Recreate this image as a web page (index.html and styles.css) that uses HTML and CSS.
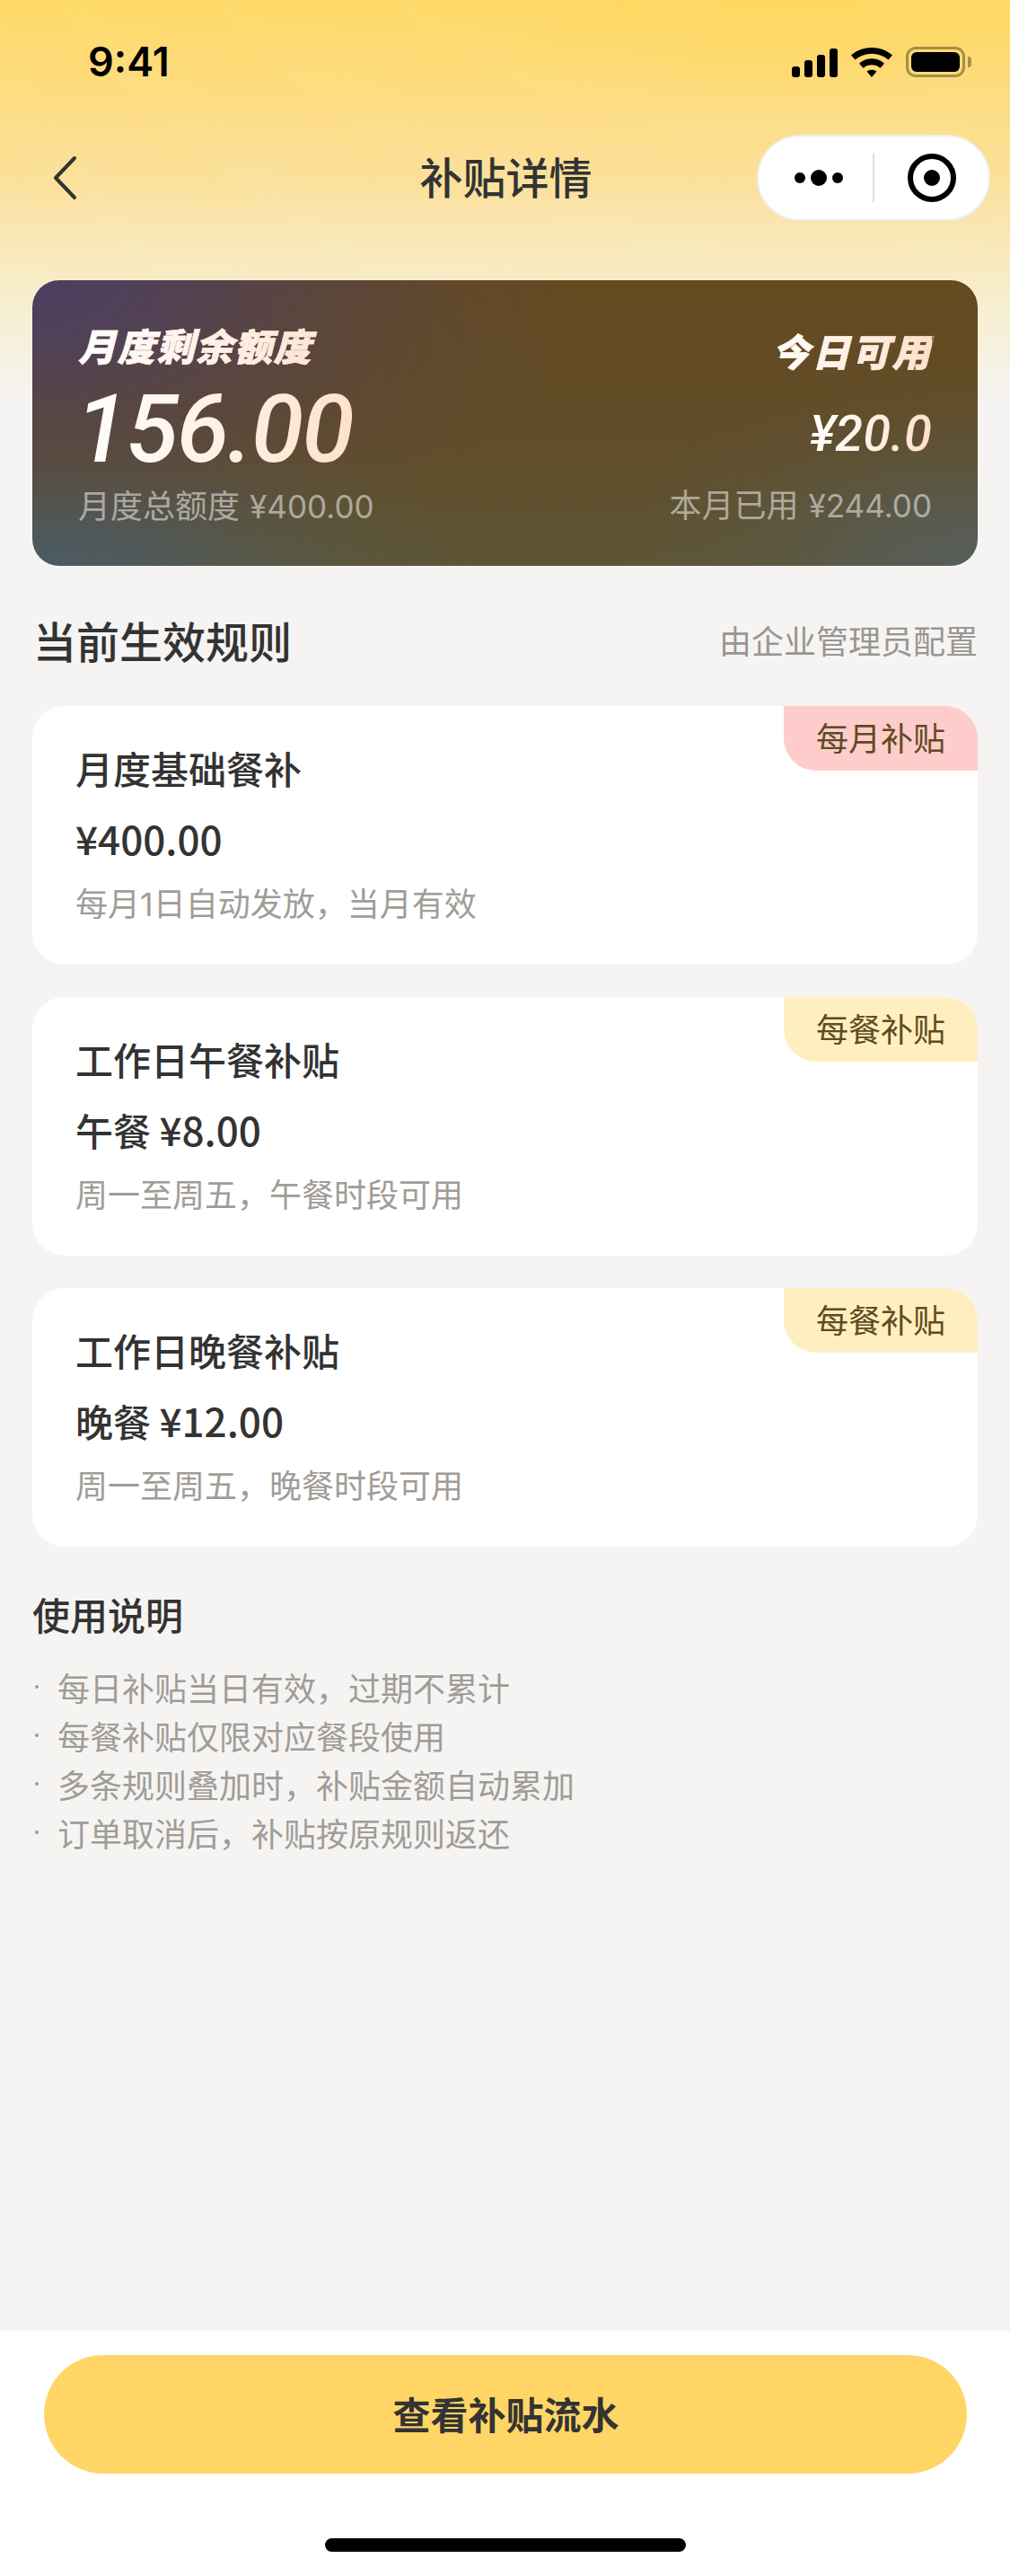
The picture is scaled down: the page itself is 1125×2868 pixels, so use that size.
FILE: index.html
```html
<!DOCTYPE html>
<html lang="zh-CN">

<head>
    <meta charset="UTF-8">
    <meta name="viewport" content="width=device-width, initial-scale=1.0">
    <title>补贴详情</title>
    <link rel="stylesheet" href="styles.css">
</head>

<body>
    <div class="page">
        <div class="status-bar">
            <span class="time">9:41</span>
            <div class="status-icons">
                <svg class="signal" width="51" height="32" viewBox="0 0 51 32">
                    <rect x="0" y="20" width="9" height="12" rx="3"/>
                    <rect x="14" y="13" width="9" height="19" rx="3"/>
                    <rect x="28" y="7" width="9" height="25" rx="3"/>
                    <rect x="42" y="0" width="9" height="32" rx="3"/>
                </svg>
                <svg class="wifi" width="46" height="33" viewBox="0 0 46 33">
                    <path d="M0 8.500C13-2.800 33-2.800 46 8.500L41.500 13.500C30.500 4.500 15.500 4.500 4.500 13.500Z"/>
                    <path d="M9 17.800C17 10.500 29 10.500 37 17.800L32.500 22.800C27 18.200 19 18.200 13.500 22.800Z"/>
                    <path d="M17.500 26.500C20.500 24 25.500 24 28.500 26.500L23 33Z"/>
                </svg>
                <div class="battery">
                    <div class="battery-level"></div>
                </div>
            </div>
        </div>

        <div class="nav-bar">
            <svg class="back" width="30" height="50" viewBox="0 0 30 50">
                <path d="M26 3 5 25l21 22" fill="none" stroke="#333" stroke-width="4" stroke-linecap="round" stroke-linejoin="round"/>
            </svg>
            <h1 class="nav-title">补贴详情</h1>
            <div class="capsule">
                <div class="capsule-side more">
                    <span class="dot"></span>
                    <span class="dot big"></span>
                    <span class="dot"></span>
                </div>
                <div class="capsule-line"></div>
                <div class="capsule-side">
                    <span class="target"></span>
                </div>
            </div>
        </div>

        <div class="content">
            <div class="quota-card">
                <div class="quota-col">
                    <div class="quota-title">月度剩余额度</div>
                    <div class="quota-num">156.00</div>
                    <div class="quota-sub">月度总额度 <span class="num">¥400.00</span></div>
                </div>
                <div class="quota-col right">
                    <div class="today-title">今日可用</div>
                    <div class="today-num">¥20.0</div>
                    <div class="quota-sub">本月已用 <span class="num">¥244.00</span></div>
                </div>
            </div>

            <div class="section-head">
                <h2>当前生效规则</h2>
                <span>由企业管理员配置</span>
            </div>

            <div class="rule-list">
                <div class="rule-card">
                    <span class="tag tag-month">每月补贴</span>
                    <div class="rule-name">月度基础餐补</div>
                    <div class="rule-amount"><span class="price">¥400.00</span></div>
                    <div class="rule-desc">每月<span class="num">1</span>日自动发放，当月有效</div>
                </div>
                <div class="rule-card">
                    <span class="tag tag-meal">每餐补贴</span>
                    <div class="rule-name">工作日午餐补贴</div>
                    <div class="rule-amount">午餐 <span class="price">¥8.00</span></div>
                    <div class="rule-desc">周一至周五，午餐时段可用</div>
                </div>
                <div class="rule-card">
                    <span class="tag tag-meal">每餐补贴</span>
                    <div class="rule-name">工作日晚餐补贴</div>
                    <div class="rule-amount">晚餐 <span class="price">¥12.00</span></div>
                    <div class="rule-desc">周一至周五，晚餐时段可用</div>
                </div>
            </div>

            <div class="notes">
                <h3>使用说明</h3>
                <ul>
                    <li>每日补贴当日有效，过期不累计</li>
                    <li>每餐补贴仅限对应餐段使用</li>
                    <li>多条规则叠加时，补贴金额自动累加</li>
                    <li>订单取消后，补贴按原规则返还</li>
                </ul>
            </div>
        </div>

        <div class="footer">
            <button class="flow-btn" type="button">查看补贴流水</button>
            <div class="home-bar"></div>
        </div>
    </div>
</body>

</html>
```

FILE: styles.css
```css
*{
    box-sizing: border-box;
    padding: 0;
    margin: 0;
}

body{
    font-family: "Noto Sans CJK SC", "Liberation Sans", sans-serif;
    color: #333;
}

.num{
    font-family: Inter, "Liberation Sans", sans-serif;
    line-height: 1;
}

.page{
    display: flex;
    flex-direction: column;
    height: 100vh;
    overflow: hidden;
    background:
        radial-gradient(ellipse 420px 130px at 880px 0, rgba(255, 214, 92, 0.55), rgba(255, 214, 92, 0)) top / 100% 330px no-repeat,
        repeating-radial-gradient(circle at 900px -625px, rgba(255, 255, 255, 0) 0, rgba(255, 255, 255, 0.025) 130px, rgba(255, 255, 255, 0) 131px) top / 100% 330px no-repeat,
        linear-gradient(180deg, #ffd966 0, #fddc7e 100px, #fbe09a 200px, #f8ebc3 300px, #f7efd2 350px, #f5f4f2 450px) top / 100% 450px no-repeat,
        #f5f4f2;
}

/* status bar */
.status-bar{
    display: flex;
    justify-content: space-between;
    align-items: center;
    height: 34px;
    margin-top: 52px;
    padding: 0 50px 0 98px;
}

.time{
    font-family: Inter, "Liberation Sans", sans-serif;
    font-size: 45px;
    font-weight: 600;
    line-height: 34px;
    color: #000;
}

.status-icons{
    display: flex;
    align-items: center;
}

.signal{
    margin-right: 15px;
    margin-top: 2px;
}

.wifi{
    margin-right: 15px;
}

.battery{
    position: relative;
    width: 66px;
    height: 34px;
    padding: 3px;
    border: 3px solid rgba(0, 0, 0, 0.35);
    border-radius: 11px;
}

.battery::after{
    content: "";
    position: absolute;
    right: -10px;
    top: 8px;
    width: 4px;
    height: 12px;
    border-radius: 0 4px 4px 0;
    background: rgba(0, 0, 0, 0.35);
}

.battery-level{
    height: 100%;
    border-radius: 6px;
    background: #000;
}

/* nav */
.nav-bar{
    position: relative;
    display: flex;
    align-items: center;
    justify-content: center;
    height: 96px;
    margin-top: 64px;
}

.back{
    position: absolute;
    left: 57px;
    top: 23px;
}

.nav-title{
    padding: 0 0 6px 2px;
    font-size: 48px;
    font-weight: 500;
    line-height: 60px;
    color: #333;
}

.capsule{
    position: absolute;
    right: 22px;
    top: 0;
    display: flex;
    align-items: center;
    width: 260px;
    height: 96px;
    background: #fff;
    border: 2px solid #eeeeee;
    border-radius: 48px;
}

.capsule-side{
    flex: none;
    width: 127px;
    display: flex;
    align-items: center;
    justify-content: center;
    gap: 6px;
}

.capsule-side.more{
    padding-left: 7px;
}

.capsule-line{
    width: 2px;
    height: 54px;
    background: #dddddd;
}

.dot{
    width: 12px;
    height: 12px;
    border-radius: 50%;
    background: #000;
}

.dot.big{
    width: 18px;
    height: 18px;
}

.target{
    position: relative;
    width: 54px;
    height: 54px;
    border: 6px solid #000;
    border-radius: 50%;
}

.target::after{
    content: "";
    position: absolute;
    left: 12px;
    top: 12px;
    width: 18px;
    height: 18px;
    border-radius: 50%;
    background: #000;
}

/* content */
.content{
    flex: 1;
    padding: 66px 36px 0;
}

.quota-card{
    display: flex;
    justify-content: space-between;
    height: 318px;
    padding: 50px 51px 0;
    border-radius: 30px;
    background:
        radial-gradient(ellipse 620px 320px at 0 0, rgba(76, 62, 100, 1) 0, rgba(76, 62, 100, 0.75) 25%, rgba(76, 62, 100, 0.42) 50%, rgba(76, 62, 100, 0.15) 75%, rgba(76, 62, 100, 0) 100%),
        radial-gradient(ellipse 520px 170px at 0 100%, rgba(74, 92, 104, 0.95) 0, rgba(74, 92, 104, 0.7) 25%, rgba(74, 92, 104, 0.35) 50%, rgba(74, 92, 104, 0.12) 75%, rgba(74, 92, 104, 0) 100%),
        radial-gradient(ellipse 420px 220px at 100% 100%, rgba(86, 94, 92, 0.95) 0, rgba(86, 94, 92, 0.7) 25%, rgba(86, 94, 92, 0.35) 50%, rgba(86, 94, 92, 0.12) 75%, rgba(86, 94, 92, 0) 100%),
        linear-gradient(180deg, #654a20 0, #614d29 55%, #5e5534 100%);
}

.quota-col{
    display: flex;
    flex-direction: column;
}

.quota-col.right{
    align-items: flex-end;
}

.quota-title,
.today-title,
.quota-num,
.today-num{
    font-style: italic;
    background: linear-gradient(90deg, #ffffff 0%, #ffdfc9 100%);
    -webkit-background-clip: text;
    background-clip: text;
    color: transparent;
}

.quota-title,
.today-title{
    font-size: 42px;
    font-weight: 900;
    line-height: 44px;
    letter-spacing: 1.500px;
    -webkit-text-stroke: 0.500px #fff1e6;
}

.today-title{
    margin-top: 6px;
    letter-spacing: 2.500px;
}

.quota-num{
    margin: 24px 0 0 -3px;
    font-family: Roboto, "Liberation Sans", sans-serif;
    font-size: 106px;
    font-weight: 500;
    line-height: 96px;
    letter-spacing: -2px;
}

.today-num{
    margin-top: 43px;
    font-family: Roboto, "Liberation Sans", sans-serif;
    font-size: 56px;
    font-weight: 500;
    line-height: 56px;
}

.quota-sub{
    margin-top: 12px;
    font-size: 36px;
    line-height: 46px;
    word-spacing: 3px;
    color: rgba(255, 255, 255, 0.5);
}

.quota-sub .num{
    font-size: 35px;
}

.today-num + .quota-sub{
    margin-top: 26px;
}

.section-head{
    display: flex;
    justify-content: space-between;
    align-items: center;
    height: 60px;
    margin-top: 52px;
    padding-left: 1px;
}

.section-head h2{
    font-size: 48px;
    font-weight: 500;
    color: #333;
}

.section-head span{
    font-size: 36px;
    color: #999591;
}

.rule-list{
    display: flex;
    flex-direction: column;
    gap: 36px;
    margin-top: 44px;
}

.rule-card{
    position: relative;
    height: 288px;
    padding: 43px 48px 0;
    border-radius: 36px;
    background: #fff;
}

.tag{
    position: absolute;
    right: 0;
    top: 0;
    width: 216px;
    height: 72px;
    font-size: 36px;
    line-height: 68px;
    text-align: center;
    border-radius: 0 36px 0 36px;
    color: #5f4b1f;
}

.tag-month{
    background: #ffcccc;
}

.tag-meal{
    background: #ffefc0;
}

.rule-name{
    font-size: 42px;
    font-weight: 500;
    line-height: 52px;
}

.rule-amount{
    margin-top: 26px;
    font-size: 42px;
    font-weight: 500;
    line-height: 54px;
}

.price{
    font-size: 44px;
    line-height: 1;
}

.rule-desc{
    margin-top: 16px;
    font-size: 36px;
    line-height: 54px;
    color: #a09c98;
}

.notes{
    margin-top: 47px;
}

.notes h3{
    font-size: 42px;
    font-weight: 500;
    line-height: 56px;
}

.notes ul{
    margin-top: 26px;
    list-style: none;
}

.notes li{
    position: relative;
    padding-left: 28px;
    font-size: 36px;
    line-height: 54px;
    color: #a09c98;
}

.notes li::before{
    content: "";
    position: absolute;
    left: 3px;
    top: 25px;
    width: 4px;
    height: 4px;
    border-radius: 50%;
    background: #a09c98;
}

/* bottom */
.footer{
    display: flex;
    flex-direction: column;
    align-items: center;
    height: 273px;
    padding-top: 27px;
    background: #fff;
}

.flow-btn{
    width: 1028px;
    height: 132px;
    padding: 0 0 4px 2px;
    border: none;
    border-radius: 66px;
    background: #ffd666;
    font-family: inherit;
    font-size: 42px;
    font-weight: 700;
    color: #333;
}

.home-bar{
    width: 402px;
    height: 15px;
    margin-top: 72px;
    border-radius: 8px;
    background: #000;
}
```
